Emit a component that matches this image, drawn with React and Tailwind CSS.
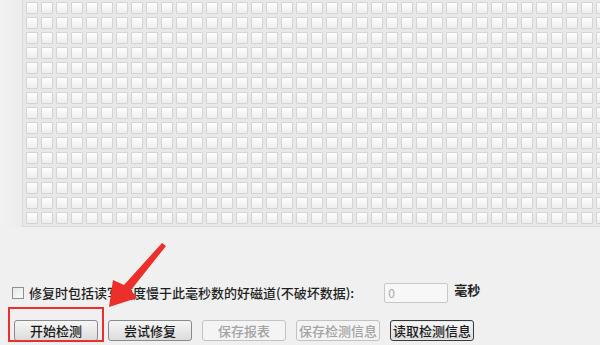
import React from "react";

const COLS = 39;
const ROWS = 15;

function Cell() {
  return (
    <div className="w-[12px] h-[12px] rounded-[1px] border border-[#d4d4d4] bg-gradient-to-b from-[#fefefe] to-[#eeeeee]" />
  );
}

function Btn({ children, disabled, focused }) {
  let cls =
    "h-[21px] w-[84px] rounded-[3px] border text-[13px] font-medium leading-none flex items-center justify-center ";
  if (disabled) {
    cls += "border-[#c2c2c2] bg-[#f4f4f4] text-[#a3a3a3]";
  } else if (focused) {
    cls += "border-[#3a3a3a] bg-gradient-to-b from-[#f6f6f6] to-[#dcdcdc] text-[#1a1a1a] shadow-[inset_0_0_0_1px_#e8e8e8]";
  } else {
    cls += "border-[#8a8a8a] bg-gradient-to-b from-[#f6f6f6] to-[#dcdcdc] text-[#1a1a1a]";
  }
  return <div className={cls}>{children}</div>;
}

export default function App() {
  const cells = Array.from({ length: COLS * ROWS });

  return (
    <div
      className="relative w-[600px] h-[345px] overflow-hidden bg-[#f0f0f0] text-[#222]"
      style={{ fontFamily: '"Noto Sans CJK SC", "Noto Sans", sans-serif' }}
    >
      {/* disk map */}
      <div className="flex h-[227px]">
        <div className="w-[22px] bg-gradient-to-r from-[#f2f2f2] to-[#ececec]" />
        <div className="flex-1 overflow-hidden border-l border-b border-[#dadada] bg-[#e8e8e8] pt-[2px] pl-[3px]">
          <div className="grid grid-cols-[repeat(39,12px)] gap-[3px] w-max">
            {cells.map((_, i) => (
              <Cell key={i} />
            ))}
          </div>
        </div>
      </div>

      {/* option row */}
      <div className="flex items-center h-[20px] mt-[56px] pl-[12px]">
        <div className="w-[12px] h-[12px] border border-[#8e8f8f] bg-gradient-to-br from-[#e6e6e6] to-[#fbfbfb]" />
        <span className="ml-[5px] text-[13px] font-medium text-[#1f1f1f] whitespace-nowrap">
          修复时包括读写速度慢于此毫秒数的好磁道(不破坏数据):
        </span>
        <div className="ml-[30px] w-[64px] h-[20px] border border-[#c8c8c8] rounded-[2px] bg-[#f7f7f7] text-[12px] text-[#a8a8a8] pl-[3px] flex items-center">
          0
        </div>
        <span className="ml-[6px] -mt-[6px] text-[13px] font-bold text-[#1f1f1f]">毫秒</span>
      </div>

      {/* buttons */}
      <div className="flex gap-[10px] pl-[14px] mt-[17px]">
        <Btn>开始检测</Btn>
        <Btn>尝试修复</Btn>
        <Btn disabled>保存报表</Btn>
        <Btn disabled>保存检测信息</Btn>
        <Btn focused>读取检测信息</Btn>
      </div>

      {/* red annotation box */}
      <div className="absolute left-[8px] top-[307px] w-[96px] h-[35px] border-2 border-[#e8302c]" />

      {/* red arrow */}
      <svg className="absolute left-0 top-0" width="600" height="345" viewBox="0 0 600 345">
        <polygon
          points="162,243 166,246 131,290 137,298 109,307 113,280 124,285"
          fill="#ec2f2a"
        />
      </svg>
    </div>
  );
}
